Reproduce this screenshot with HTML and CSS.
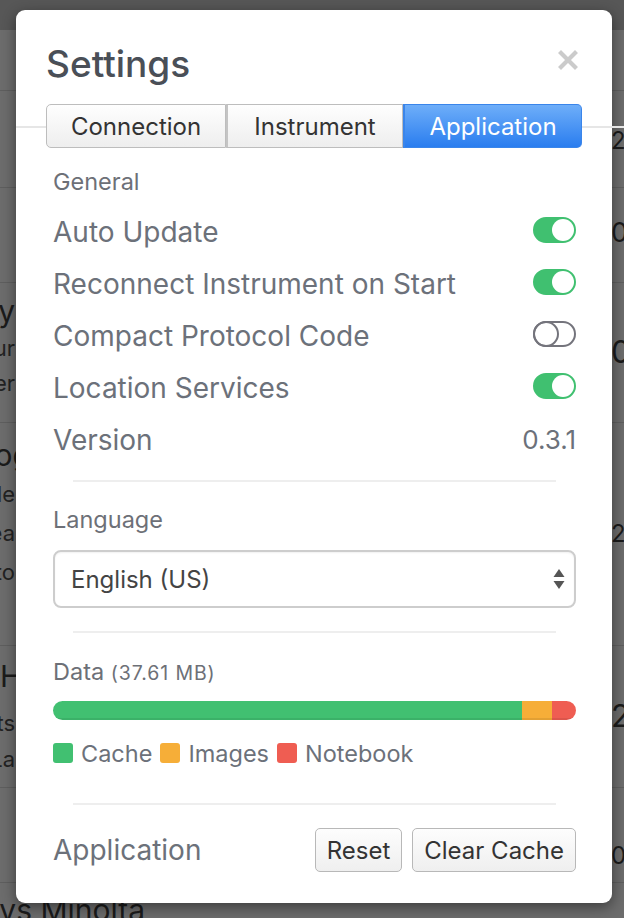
FILE: index.html
```html
<!DOCTYPE html>
<html lang="en">
<head>
<meta charset="utf-8">
<title>Settings</title>
<link rel="stylesheet" href="styles.css">
</head>
<body>
<div class="page">
  <div class="topbar"></div>
  <div class="list">
    <div class="row h61"></div>
    <div class="row h97"><div class="lcell"></div><div class="rcell s24 p35">2017-03-14</div></div>
    <div class="row h95"><div class="lcell"></div><div class="rcell s27 p29">01/02/2017</div></div>
    <div class="row h140">
      <div class="lcell p10">
        <div class="ltitle">Chemistry</div>
        <div class="lsub lh35 m2">Colour</div>
        <div class="lsub lh35">Water</div>
      </div>
      <div class="rcell s31 p51">0</div>
    </div>
    <div class="row h223">
      <div class="lcell p14">
        <div class="ltitle ext16">Catalog</div>
        <div class="lsub lh39 m2">Mode</div>
        <div class="lsub lh39">Clea</div>
        <div class="lsub lh39">Auto</div>
      </div>
      <div class="rcell s24 p96">2017</div>
    </div>
    <div class="row h142">
      <div class="lcell p12">
        <div class="ltitle lstart">Hex Readings</div>
        <div class="lsub lh36 m11">Tests</div>
        <div class="lsub lh36">Labs La</div>
      </div>
      <div class="rcell s31 p52">2</div>
    </div>
    <div class="row h95"><div class="lcell"></div><div class="rcell s24 p53">0</div></div>
    <div class="row last">
      <div class="lcell wide p9"><div class="ltitle">Days Minolta</div></div>
    </div>
  </div>
</div>

<div class="modal">
  <header class="modal-head">
    <h1 class="title">Settings</h1>
    <button class="close" aria-label="Close">
      <svg width="20" height="20" viewBox="0 0 20 20"><path d="M3 3 L17 17 M17 3 L3 17" stroke="#cbcbcb" stroke-width="4.2" stroke-linecap="square"/></svg>
    </button>
  </header>

  <nav class="tabs">
    <button class="tab">Connection</button>
    <button class="tab">Instrument</button>
    <button class="tab active">Application</button>
  </nav>

  <div class="body">
    <div class="section-label">General</div>
    <div class="setting"><span class="label">Auto Update</span><span class="toggle on"><span class="knob"></span></span></div>
    <div class="setting"><span class="label">Reconnect Instrument on Start</span><span class="toggle on"><span class="knob"></span></span></div>
    <div class="setting"><span class="label">Compact Protocol Code</span><span class="toggle off"><span class="knob"></span></span></div>
    <div class="setting"><span class="label">Location Services</span><span class="toggle on"><span class="knob"></span></span></div>
    <div class="setting"><span class="label">Version</span><span class="value">0.3.1</span></div>

    <div class="divider d-general"></div>

    <div class="section-label lang">Language</div>
    <div class="select">
      <span>English (US)</span>
      <svg width="12" height="22" viewBox="0 0 12 22"><path d="M6 1 L11.5 9 L0.5 9 Z M6 21 L11.5 13 L0.5 13 Z" fill="#555"/></svg>
    </div>

    <div class="divider d-lang"></div>

    <div class="section-label data">Data <small>(37.61 MB)</small></div>
    <div class="bar">
      <span class="seg cache" style="width:89.7%"></span>
      <span class="seg images" style="width:5.7%"></span>
      <span class="seg notebook" style="width:4.6%"></span>
    </div>
    <div class="legend">
      <span class="sw cache"></span><span class="ltext">Cache</span>
      <span class="sw images"></span><span class="ltext">Images</span>
      <span class="sw notebook"></span><span class="ltext">Notebook</span>
    </div>

    <div class="divider d-data"></div>

    <div class="footer">
      <span class="label">Application</span>
      <div class="actions">
        <button class="btn">Reset</button>
        <button class="btn">Clear Cache</button>
      </div>
    </div>
  </div>
</div>
</body>
</html>
```

FILE: styles.css
```css
html, body {
  margin: 0;
  padding: 0;
}
body {
  width: 624px;
  height: 918px;
  overflow: hidden;
  font-family: Inter, "Noto Sans", "Liberation Sans", sans-serif;
  background: #6b6b6b;
  position: relative;
}

/* ---------- dimmed page behind ---------- */
.page {
  width: 624px;
  height: 918px;
  overflow: hidden;
  background: #6c6c6c;
  color: #1b1b1b;
}
.topbar {
  height: 30px;
  background: #575757;
}
.row {
  display: flex;
  box-sizing: border-box;
  border-bottom: 1px solid #5e5e5e;
}
.row.last { border-bottom: none; height: 40px; }
.h61 { height: 61px; }
.h97 { height: 97px; }
.h95 { height: 95px; }
.h140 { height: 140px; }
.h223 { height: 223px; }
.h142 { height: 142px; }

.lcell {
  width: 15px;
  display: flex;
  flex-direction: column;
  align-items: flex-end;
  white-space: nowrap;
}
.lcell.wide { width: 145px; }
.ltitle { font-size: 30px; line-height: 36px; }
.ext16 { margin-right: -16px; }
.lstart { align-self: flex-start; }
.lsub { font-size: 22px; color: #222; }
.lh35 { line-height: 35px; }
.lh36 { line-height: 36px; }
.lh39 { line-height: 39px; }
.m2 { margin-top: 2px; }
.m11 { margin-top: 11px; }

.rcell {
  margin-left: auto;
  width: 13px;
  white-space: nowrap;
}
.s24 { font-size: 24px; line-height: 30px; }
.s27 { font-size: 27px; line-height: 32px; }
.s31 { font-size: 31px; line-height: 36px; }

.p9 { padding-top: 9px; }
.p10 { padding-top: 10px; }
.p12 { padding-top: 12px; }
.p14 { padding-top: 14px; }
.p29 { padding-top: 29px; }
.p35 { padding-top: 35px; }
.p51 { padding-top: 51px; }
.p52 { padding-top: 52px; }
.p53 { padding-top: 53px; }
.p96 { padding-top: 96px; }

/* ---------- modal ---------- */
.modal {
  position: absolute;
  top: 10px;
  left: 16px;
  width: 596px;
  height: 893px;
  box-sizing: border-box;
  padding: 34px 30px 0 30px;
  background: #fff;
  border-radius: 9px;
  box-shadow: 0 4px 14px rgba(0, 0, 0, 0.45);
}

.modal-head {
  display: flex;
  justify-content: space-between;
  align-items: flex-start;
}
.title {
  margin: 0;
  font-size: 37px;
  line-height: 40px;
  font-weight: 500;
  color: #4a4f57;
}
.close {
  margin: 6px 4px 0 0;
  padding: 0;
  border: 0;
  background: none;
  width: 20px;
  height: 20px;
  display: flex;
}

.tabs {
  position: relative;
  z-index: 0;
  margin-top: 20px;
  display: grid;
  grid-template-columns: 180px 177px 1fr;
  height: 44px;
}
.tabs::before {
  content: "";
  position: absolute;
  left: -30px;
  right: -42px;
  top: 22px;
  height: 2px;
  background: #e6e6e6;
  z-index: -1;
}
.tab {
  font-family: inherit;
  font-size: 24px;
  color: #333;
  margin: 0;
  padding: 0;
  border: 1.5px solid #bdbdbd;
  border-left-width: 0;
  background: linear-gradient(#fefefe, #eeeeee);
}
.tab:first-child {
  border-left-width: 1.5px;
  border-radius: 5px 0 0 5px;
}
.tab + .tab {
  border-left: 2px solid #c4c4c4;
}
.tab.active {
  color: #fff;
  background: linear-gradient(#6eaef9, #2a7def);
  border-color: #3a85ea;
  border-radius: 0 5px 5px 0;
}

.body {
  padding: 0 6px 0 7px;
}
.section-label {
  font-size: 23.5px;
  line-height: 28px;
  color: #6d7077;
  margin-top: 20px;
  margin-bottom: 8px;
}
.section-label.lang { margin-top: 24px; margin-bottom: 16px; }
.section-label.data { margin-top: 25px; margin-bottom: 14px; }
.section-label small { font-size: 19.5px; letter-spacing: 0.9px; }

.setting {
  height: 52px;
  display: flex;
  align-items: center;
  justify-content: space-between;
}
.label {
  font-size: 28px;
  color: #6c717a;
  padding-top: 3px;
}
.value {
  font-size: 26px;
  color: #6c717a;
  padding-top: 3px;
}

.toggle {
  width: 43px;
  height: 26px;
  box-sizing: border-box;
  border-radius: 13px;
  border: 2px solid;
  display: flex;
  align-items: center;
}
.toggle.on {
  background: #40c070;
  border-color: #40c070;
  justify-content: flex-end;
}
.toggle.on .knob {
  width: 22px;
  height: 22px;
  border-radius: 50%;
  background: #fff;
}
.toggle.off {
  background: #fff;
  border-color: #74747c;
  justify-content: flex-start;
}
.toggle.off .knob {
  width: 26px;
  height: 26px;
  margin-left: -2px;
  box-sizing: border-box;
  border-radius: 50%;
  border: 2px solid #74747c;
}

.divider {
  height: 2px;
  background: #eeeeee;
  margin: 0 20px;
}
.d-general { margin-top: 16px; }
.d-lang { margin-top: 23px; }
.d-data { margin-top: 36px; }

.select {
  height: 58px;
  box-sizing: border-box;
  border: 2px solid #cdcdcd;
  border-radius: 8px;
  box-shadow: inset 0 1px 2px rgba(0, 0, 0, 0.06);
  display: flex;
  align-items: center;
  justify-content: space-between;
  padding: 0 9px 0 16px;
  font-size: 24px;
  color: #444;
}

.bar {
  height: 19px;
  border-radius: 10px;
  overflow: hidden;
  display: flex;
}
.seg {
  height: 100%;
  box-shadow: inset 0 -2px 0 rgba(0, 0, 0, 0.08);
}
.cache { background: #41c071; }
.images { background: #f6ae38; }
.notebook { background: #ef5d52; }

.legend {
  margin-top: 19px;
  display: flex;
  align-items: center;
  height: 28px;
  font-size: 23.5px;
  color: #6c717a;
}
.sw {
  width: 20px;
  height: 20px;
  border-radius: 3px;
  margin-right: 8px;
}
.ltext { margin-right: 8px; }

.footer {
  margin-top: 23px;
  height: 44px;
  display: flex;
  align-items: center;
  justify-content: space-between;
}
.footer .label { padding-top: 0; }
.actions {
  display: flex;
  gap: 10px;
}
.btn {
  font-family: inherit;
  font-size: 24px;
  color: #333;
  height: 44px;
  padding: 0 11px;
  margin: 0;
  border: 1.5px solid #b8b8b8;
  border-radius: 5px;
  background: linear-gradient(#fdfdfd, #efefef);
}
```
